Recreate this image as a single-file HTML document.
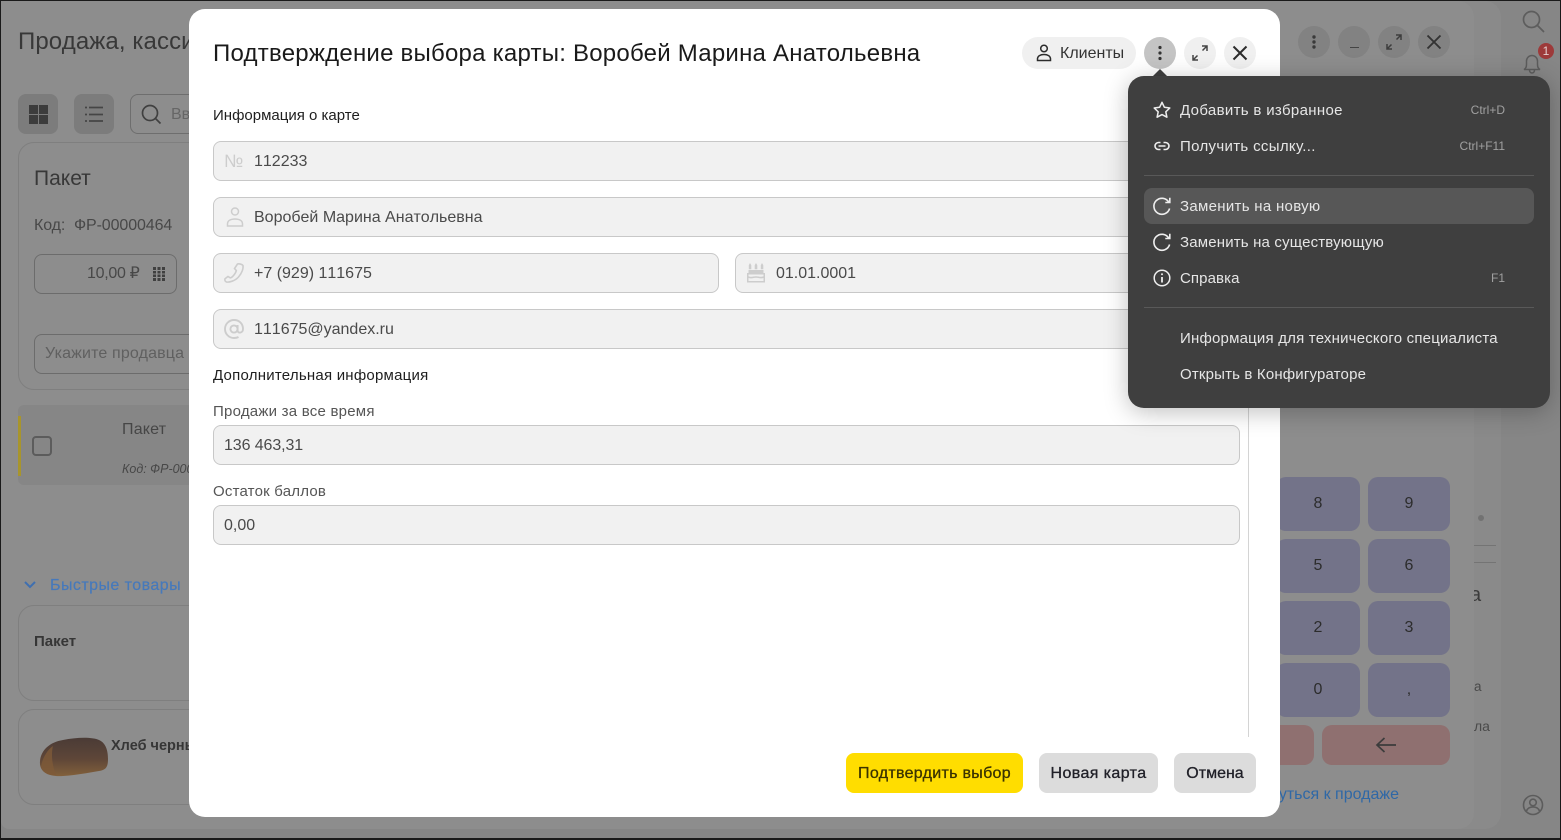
<!DOCTYPE html>
<html lang="ru">
<head>
<meta charset="utf-8">
<title>Подтверждение выбора карты</title>
<style>
html,body{margin:0;padding:0;width:1561px;height:840px;overflow:hidden;background:#1a1a1a}
body{position:relative;font-family:"Liberation Sans","Noto Sans CJK SC",sans-serif}
.a{position:absolute;box-sizing:border-box}
.t{position:absolute;white-space:nowrap;line-height:20px;height:20px}
.v{position:absolute;white-space:nowrap;line-height:20px;height:20px;font-size:16px;color:#4a4a4a;font-kerning:none}
.fld{position:absolute;box-sizing:border-box;background:#f1f1f1;border:1px solid #c8c8c8;border-radius:8px;height:40px}
.key{position:absolute;background:#737389;border-radius:10px;color:#2c2c2c;font-size:16px;text-align:center;line-height:54px;height:54px}
.mt{position:absolute;left:1180px;color:#e6e6e6;font-size:15px;line-height:20px;white-space:nowrap}
.ms{position:absolute;color:#a0a0a0;font-size:12px;line-height:20px;white-space:nowrap;right:56px}
.btn{position:absolute;box-sizing:border-box;top:753px;height:40px;border-radius:8px;font-size:16px;line-height:42px;text-align:center}
svg{position:absolute;overflow:visible}
</style>
</head>
<body>
<!-- background -->
<div class="a" style="left:1px;top:1px;width:1559px;height:837px;background:#868686"></div>
<div class="a" style="left:1px;top:1px;width:1500px;height:828px;background:#8a8a8a;border-radius:0 16px 16px 8px"></div>
<div class="a" style="left:1px;top:1px;width:1473px;height:828px;background:#8d8d8d;border-radius:0 16px 16px 8px"></div>

<div class="t" style="left:18px;top:27px;height:30px;line-height:30px;font-size:24px;color:#383838;letter-spacing:.1px">Продажа, касси</div>

<div class="a" style="left:18px;top:94px;width:40px;height:40px;border-radius:8px;background:#7c7c7c"></div>
<div class="a" style="left:29px;top:105px;width:9px;height:9px;background:#3c3c3c"></div>
<div class="a" style="left:39px;top:105px;width:9px;height:9px;background:#3c3c3c"></div>
<div class="a" style="left:29px;top:115px;width:9px;height:9px;background:#3c3c3c"></div>
<div class="a" style="left:39px;top:115px;width:9px;height:9px;background:#3c3c3c"></div>
<div class="a" style="left:74px;top:94px;width:40px;height:40px;border-radius:8px;background:#7c7c7c"></div>
<svg style="left:84px;top:104px" width="20" height="20" fill="none" stroke="#454545" stroke-width="1.700"><path d="M5 3.500h14M5 10.500h14M5 17h14"/><path d="M1 3.500h2M1 10.500h2M1 17h2"/></svg>
<div class="a" style="left:130px;top:94px;width:80px;height:40px;border:1px solid #6e6e6e;border-radius:8px"></div>
<svg style="left:141px;top:104px" width="20" height="20" fill="none" stroke="#404040" stroke-width="1.700"><circle cx="9" cy="9" r="7.500"/><path d="M14.500 14.500l5 5"/></svg>
<div class="t" style="left:171px;top:105px;font-size:16px;color:#666">Вв</div>

<div class="a" style="left:18px;top:142px;width:260px;height:248px;border:1px solid #7f7f7f;border-radius:16px"></div>
<div class="t" style="left:34px;top:166px;height:26px;line-height:26px;font-size:21px;color:#383838">Пакет</div>
<div class="t" style="left:34px;top:216px;font-size:16px;color:#484848;letter-spacing:-.1px">Код:&nbsp; ФР-00000464</div>
<div class="a" style="left:34px;top:254px;width:143px;height:40px;border:1px solid #6c6c6c;border-radius:8px"></div>
<div class="t" style="left:87px;top:264px;font-size:16px;color:#484848;letter-spacing:-.3px">10,00 ₽</div>
<svg style="left:153px;top:267px" width="12" height="14" fill="#404040"><path d="M0 0h3v3H0zM4.500 0h3v3h-3zM9 0h3v3H9zM0 4h3v2.500H0zM4.500 4h3v2.500h-3zM9 4h3v2.500H9zM0 7.500h3V10H0zM4.500 7.500h3V10h-3zM9 7.500h3V10H9zM0 11h3v3H0zM4.500 11h3v3h-3zM9 11h3v3H9z"/></svg>
<div class="a" style="left:34px;top:334px;width:200px;height:40px;border:1px solid #6c6c6c;border-radius:8px"></div>
<div class="t" style="left:45px;top:344px;font-size:16px;color:#606060;letter-spacing:.15px">Укажите продавца</div>

<div class="a" style="left:18px;top:405px;width:240px;height:80px;border-radius:6px;background:#868686"></div>
<div class="a" style="left:18px;top:416px;width:3px;height:60px;background:#a8952c"></div>
<div class="a" style="left:32px;top:436px;width:20px;height:20px;border:2px solid #5c5c5c;border-radius:4px"></div>
<div class="t" style="left:122px;top:420px;font-size:16px;color:#464646;letter-spacing:.2px">Пакет</div>
<div class="t" style="left:122px;top:459px;font-size:12.500px;font-style:italic;color:#484848">Код: ФР-00000464</div>

<svg style="left:23px;top:580px" width="14" height="10" fill="none" stroke="#3f6fb0" stroke-width="2"><path d="M2 2l5 5 5-5"/></svg>
<div class="t" style="left:50px;top:576px;font-size:16px;color:#4679bb;letter-spacing:.45px;-webkit-text-stroke:.2px #4679bb">Быстрые товары</div>
<div class="a" style="left:18px;top:605px;width:240px;height:96px;border:1px solid #7f7f7f;border-radius:16px"></div>
<div class="t" style="left:34px;top:632px;font-size:15px;font-weight:700;color:#363636">Пакет</div>
<div class="a" style="left:18px;top:709px;width:240px;height:96px;border:1px solid #7f7f7f;border-radius:16px"></div>
<svg style="left:39px;top:737px" width="70" height="41">
<defs><linearGradient id="br" x1="0" y1="0" x2="0" y2="1"><stop offset="0" stop-color="#4a3b36"/><stop offset=".55" stop-color="#5e4638"/><stop offset="1" stop-color="#82603b"/></linearGradient></defs>
<path d="M1 24C2 13 11 5 24 3 38 0 54 0 60 3c7 3 9 11 9 19 0 8-2 11-9 12-12 2-22 4-36 5C9 40 0 35 1 24z" fill="url(#br)"/>
<path d="M2 30c1-8 6-17 12-21-2 8-1 19 3 29-7 1-13-2-15-8z" fill="#7e5a38" opacity=".8"/>
</svg>
<div class="t" style="left:111px;top:736px;font-size:14.500px;font-weight:700;color:#363636">Хлеб черный</div>

<!-- right background content -->
<div class="a" style="left:1298px;top:26px;width:32px;height:32px;border-radius:50%;background:#828282"></div>
<svg style="left:1298px;top:26px" width="32" height="32" fill="#3a3a3a"><circle cx="16" cy="11" r="1.700"/><circle cx="16" cy="16" r="1.700"/><circle cx="16" cy="21" r="1.700"/></svg>
<div class="a" style="left:1338px;top:26px;width:32px;height:32px;border-radius:50%;background:#828282"></div>
<div class="a" style="left:1350px;top:47px;width:9px;height:1px;background:#444"></div>
<div class="a" style="left:1378px;top:26px;width:32px;height:32px;border-radius:50%;background:#828282"></div>
<svg style="left:1378px;top:26px" width="32" height="32" fill="none" stroke="#3c3c3c" stroke-width="1.500"><path d="M18.500 13.500l4-4M18 9h5v5M13.500 18.500l-4 4M14 23H9v-5"/></svg>
<div class="a" style="left:1418px;top:26px;width:32px;height:32px;border-radius:50%;background:#828282"></div>
<svg style="left:1418px;top:26px" width="32" height="32" fill="none" stroke="#333" stroke-width="1.900"><path d="M9.500 9.500l13 13M22.500 9.500l-13 13"/></svg>

<svg style="left:1522px;top:10px" width="24" height="24" fill="none" stroke="#5d5d5d" stroke-width="1.700"><circle cx="9.500" cy="9.500" r="8"/><path d="M15 15l7 7"/></svg>
<svg style="left:1523px;top:53px" width="18" height="21" fill="none" stroke="#5c5c5c" stroke-width="1.500"><path d="M1 16.500c2-1 2.500-2.500 2.500-5V8a5.500 5.500 0 0 1 11 0v3.500c0 2.500.5 4 2.500 5zM6.500 17c0 4 5 4 5 0"/></svg>
<div class="a" style="left:1538px;top:43px;width:16px;height:16px;border-radius:50%;background:#9d3a3a;color:#e3cfcf;font-size:12px;line-height:16px;text-align:center">1</div>

<div class="a" style="left:1478px;top:515px;width:6px;height:6px;border-radius:50%;background:#727272"></div>
<div class="a" style="left:1474px;top:545px;width:22px;height:1px;background:#747474"></div>
<div class="a" style="left:1474px;top:562px;width:22px;height:1px;background:#747474"></div>
<div class="a" style="left:1474px;top:580px;width:20px;height:30px;overflow:hidden"><div class="t" style="left:-4px;top:3px;height:24px;line-height:24px;font-size:20px;color:#3c3c3c">а</div></div>
<div class="t" style="left:1474px;top:677px;font-size:13.500px;color:#4a4a4a">а</div>
<div class="t" style="left:1474px;top:716px;font-size:14px;color:#4a4a4a">ла</div>
<svg style="left:1522px;top:794px" width="22" height="22" fill="none" stroke="#5c5c5c" stroke-width="1.600"><circle cx="11" cy="11" r="9.500"/><circle cx="11" cy="8.500" r="3.300"/><path d="M4.500 17c1-3 3.500-4 6.500-4s5.500 1 6.500 4"/></svg>

<!-- numpad -->
<div class="key" style="left:1276px;top:477px;width:84px">8</div>
<div class="key" style="left:1368px;top:477px;width:82px">9</div>
<div class="key" style="left:1276px;top:539px;width:84px">5</div>
<div class="key" style="left:1368px;top:539px;width:82px">6</div>
<div class="key" style="left:1276px;top:601px;width:84px">2</div>
<div class="key" style="left:1368px;top:601px;width:82px">3</div>
<div class="key" style="left:1276px;top:663px;width:84px">0</div>
<div class="key" style="left:1368px;top:663px;width:82px">,</div>
<div class="a" style="left:1270px;top:725px;width:44px;height:40px;border-radius:10px;background:#8f7070"></div>
<div class="a" style="left:1322px;top:725px;width:128px;height:40px;border-radius:10px;background:#8f7070"></div>
<svg style="left:1375px;top:735px" width="22" height="20" fill="none" stroke="#3c3c3c" stroke-width="1.700"><path d="M21 10H2M9.500 3L2 10l7.500 7"/></svg>
<div class="t" style="left:1200px;top:785px;width:199px;text-align:right;font-size:16px;color:#2f68a6">Вернуться к продаже</div>

<!-- dialog -->
<div class="a" style="left:189px;top:9px;width:1091px;height:808px;background:#fff;border-radius:16px"></div>
<div class="t" style="left:213px;top:38px;height:32px;line-height:32px;font-size:24px;color:#1a1a1a;letter-spacing:.23px">Подтверждение выбора карты: Воробей Марина Анатольевна</div>

<div class="a" style="left:1022px;top:37px;width:114px;height:32px;border-radius:16px;background:#f0f0f0"></div>
<svg style="left:1035px;top:44px" width="18" height="18" fill="none" stroke="#2c2c2c" stroke-width="1.500"><circle cx="9" cy="4.500" r="3.300"/><path d="M2.500 16.500v-1.500c0-3 3-4.500 6.500-4.500s6.500 1.500 6.500 4.500v1.500z"/></svg>
<div class="t" style="left:1060px;top:44px;font-size:16px;color:#333">Клиенты</div>
<div class="a" style="left:1144px;top:37px;width:32px;height:32px;border-radius:50%;background:#c4c4c4"></div>
<svg style="left:1144px;top:37px" width="32" height="32" fill="#333"><circle cx="16" cy="10.500" r="1.600"/><circle cx="16" cy="16" r="1.600"/><circle cx="16" cy="21.500" r="1.600"/></svg>
<div class="a" style="left:1184px;top:37px;width:32px;height:32px;border-radius:50%;background:#f0f0f0"></div>
<svg style="left:1184px;top:37px" width="32" height="32" fill="none" stroke="#444" stroke-width="1.500"><path d="M18.500 13.500l4-4M18 9h5v5M13.500 18.500l-4 4M14 23H9v-5"/></svg>
<div class="a" style="left:1224px;top:37px;width:32px;height:32px;border-radius:50%;background:#f0f0f0"></div>
<svg style="left:1224px;top:37px" width="32" height="32" fill="none" stroke="#2c2c2c" stroke-width="2"><path d="M9.500 9.500l13 13M22.500 9.500l-13 13"/></svg>

<div class="t" style="left:213px;top:106px;font-size:15px;color:#1e1e1e">Информация о карте</div>

<div class="fld" style="left:213px;top:141px;width:1027px"></div>
<div class="t" style="left:224px;top:151px;font-size:18px;color:#cdcdcd;letter-spacing:-.5px">№</div>
<div class="v" style="left:254px;top:152px">112233</div>

<div class="fld" style="left:213px;top:197px;width:1027px"></div>
<svg style="left:225px;top:207px" width="20" height="20" fill="none" stroke="#cdcdcd" stroke-width="1.500"><circle cx="10" cy="4.500" r="3.500"/><path d="M2.500 19v-2c0-3.500 3.500-5 7.500-5s7.500 1.500 7.500 5v2z"/></svg>
<div class="v" style="left:254px;top:208px">Воробей Марина Анатольевна</div>

<div class="fld" style="left:213px;top:253px;width:506px"></div>
<svg style="left:224px;top:263px" width="20" height="20" fill="none" stroke="#cdcdcd" stroke-width="1.600"><path d="M13.500 1c2-.5 5 .5 5.500 1.500.5 3-1 7.500-4.500 11.500S5 19.500 2.500 19c-1.500-.5-2-2-1.500-3.200l3-2.300 2.300 1.400c2-.5 5.500-4.500 6-7.400l-1.800-2z"/></svg>
<div class="v" style="left:254px;top:264px">+7 (929) 111675</div>

<div class="fld" style="left:735px;top:253px;width:505px"></div>
<svg style="left:747px;top:263px" width="18" height="20" fill="#cdcdcd"><path d="M3 0l1.300 2.200v4H1.800v-4zM9 0l1.300 2.200v4H7.700v-4zM15 0l1.300 2.200v4h-2.500v-4z"/><path d="M1.500 7h15v3H18v9.500H0V10h1.500zM1.500 11.500v1.700c2.500 1.200 4.500 0 7.500 0s5 1.200 7.500 0v-1.700zM1.500 15v3h15v-3c-2.500 1-4.500-.3-7.500-.3s-5 1.300-7.500.3z" fill-rule="evenodd"/></svg>
<div class="v" style="left:776px;top:264px">01.01.0001</div>

<div class="fld" style="left:213px;top:309px;width:1027px"></div>
<svg style="left:224px;top:319px" width="20" height="20" fill="none" stroke="#cdcdcd" stroke-width="1.900"><circle cx="10" cy="10" r="3.600"/><path d="M13.600 6v5.500c0 3 5.400 3 5.400-1.500C19 4.500 15 1 10 1S1 5 1 10s4 9 9 9c2 0 3.200-.3 4.500-1"/></svg>
<div class="v" style="left:254px;top:320px">111675@yandex.ru</div>

<div class="t" style="left:213px;top:366px;font-size:15px;color:#1e1e1e;letter-spacing:.23px">Дополнительная информация</div>

<div class="t" style="left:213px;top:402px;font-size:15px;color:#555;letter-spacing:.23px">Продажи за все время</div>
<div class="fld" style="left:213px;top:425px;width:1027px"></div>
<div class="v" style="left:224px;top:436px;letter-spacing:-.1px">136 463,31</div>
<div class="t" style="left:213px;top:482px;font-size:15px;color:#555;letter-spacing:.2px">Остаток баллов</div>
<div class="fld" style="left:213px;top:505px;width:1027px"></div>
<div class="v" style="left:224px;top:516px">0,00</div>

<div class="a" style="left:1248px;top:100px;width:1px;height:637px;background:#d4d4d4"></div>

<div class="btn" style="left:846px;width:177px;background:#ffdd00;color:#3a3300;letter-spacing:.3px;-webkit-text-stroke:.3px #3a3300">Подтвердить выбор</div>
<div class="btn" style="left:1039px;width:119px;background:#dcdcdc;color:#202028;letter-spacing:.4px;-webkit-text-stroke:.3px #202028">Новая карта</div>
<div class="btn" style="left:1174px;width:82px;background:#dcdcdc;color:#202028;-webkit-text-stroke:.3px #202028">Отмена</div>

<!-- menu -->
<svg style="left:1148px;top:66px" width="24" height="12" fill="#3f3f3f"><path d="M3 12L12 3l9 9z"/></svg>
<div class="a" style="left:1128px;top:76px;width:422px;height:332px;border-radius:16px;background:#3f3f3f;box-shadow:0 4px 24px rgba(0,0,0,.25)"></div>
<div class="a" style="left:1144px;top:188px;width:390px;height:36px;border-radius:8px;background:#575757"></div>
<div class="a" style="left:1144px;top:175px;width:390px;height:1px;background:#595959"></div>
<div class="a" style="left:1144px;top:307px;width:390px;height:1px;background:#595959"></div>

<svg style="left:1153px;top:101px" width="18" height="18" fill="none" stroke="#eee" stroke-width="1.500" stroke-linejoin="round"><path d="M9 1.300l2.400 5 5.400.7-4 3.800 1.100 5.400L9 13.600l-4.900 2.600 1.100-5.400-4-3.800 5.400-.7z"/></svg>
<div class="mt" style="top:101px;letter-spacing:.33px">Добавить в избранное</div>
<div class="ms" style="top:100px">Ctrl+D</div>

<svg style="left:1154px;top:137px" width="16" height="18" fill="none" stroke="#eee" stroke-width="1.600"><path d="M6.500 5.500H4.500a3.500 3.500 0 0 0 0 7h2M9.500 5.500h2a3.500 3.500 0 0 1 0 7h-2M4.500 9h7"/></svg>
<div class="mt" style="top:137px;letter-spacing:.33px">Получить ссылку...</div>
<div class="ms" style="top:136px">Ctrl+F11</div>

<svg style="left:1153px;top:197px" width="18" height="18" fill="none" stroke="#eee" stroke-width="1.600"><path d="M15.800 5.200A8 8 0 1 0 16.600 11.500"/><path d="M16.800 .8v4.700h-4.500"/></svg>
<div class="mt" style="top:197px;letter-spacing:.3px">Заменить на новую</div>
<svg style="left:1153px;top:233px" width="18" height="18" fill="none" stroke="#eee" stroke-width="1.600"><path d="M15.800 5.200A8 8 0 1 0 16.600 11.500"/><path d="M16.800 .8v4.700h-4.500"/></svg>
<div class="mt" style="top:233px;letter-spacing:.17px">Заменить на существующую</div>

<svg style="left:1153px;top:269px" width="18" height="18" fill="none" stroke="#eee" stroke-width="1.500"><circle cx="9" cy="9" r="7.800"/><path d="M9 8v5.500" stroke-width="1.800"/><circle cx="9" cy="5.200" r="1" fill="#eee" stroke="none"/></svg>
<div class="mt" style="top:269px;letter-spacing:.1px">Справка</div>
<div class="ms" style="top:268px">F1</div>

<div class="mt" style="top:329px;letter-spacing:.2px">Информация для технического специалиста</div>
<div class="mt" style="top:365px;letter-spacing:.17px">Открыть в Конфигураторе</div>
</body>
</html>
